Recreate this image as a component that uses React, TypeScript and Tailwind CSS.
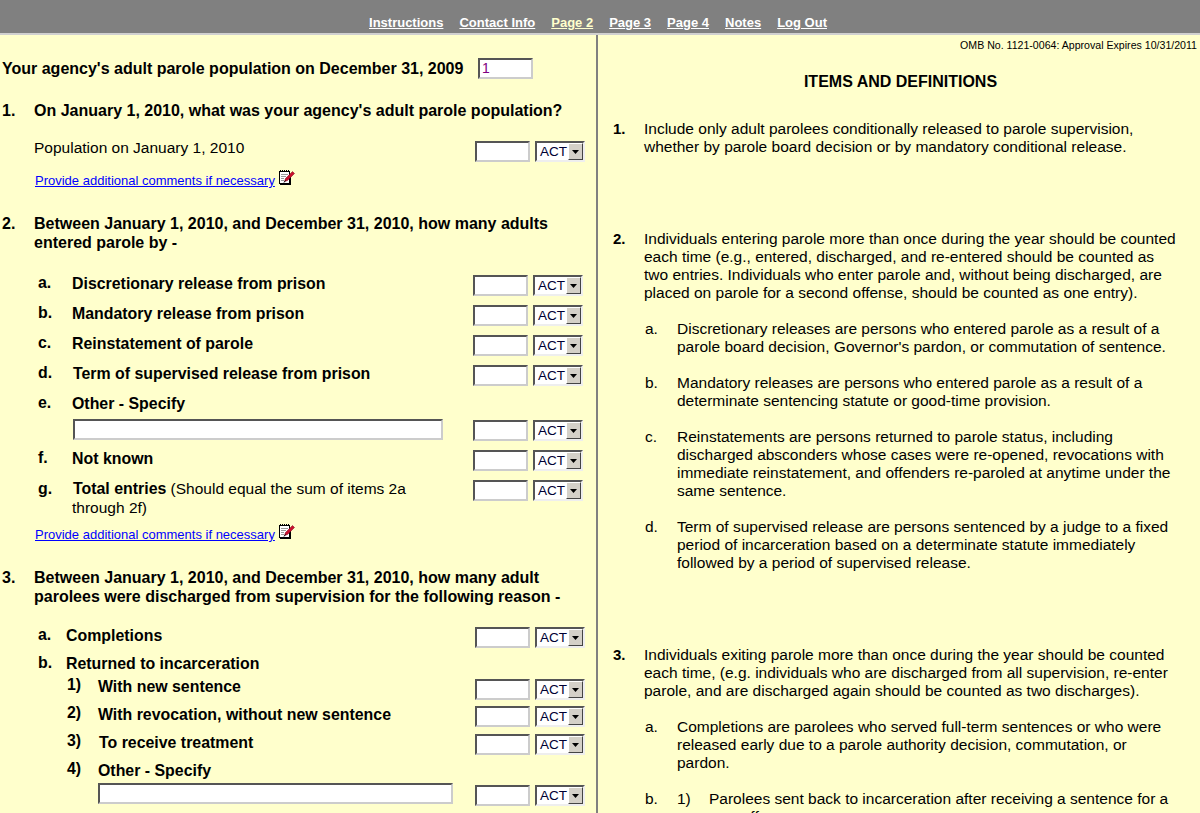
import React from "react";

const F = "font-['Liberation_Sans',Arial,sans-serif]";

function Note() {
  return (
    <svg width="17" height="16" viewBox="0 0 17 16" className="shrink-0">
      <rect x="1.5" y="2.5" width="10" height="12" fill="#fff" stroke="#000" />
      <path d="M12.5 6v10M2 15.5h11" stroke="#000" />
      <path d="M2 1.5h10" stroke="#000" strokeDasharray="1 1" />
      <path d="M3 5.5h7M3 7.5h5M3 9.5h3M3 11.5h3" stroke="#999" />
      <path d="M6.5 12.5l1-3 7-7 2 2-7 7z" fill="#c8102e" stroke="#7a0018" strokeWidth=".5" />
      <path d="M6 13.5l1.5-2" stroke="#000" />
    </svg>
  );
}

function Field({ className = "", value = "" }: { className?: string; value?: string }) {
  return (
    <input
      readOnly
      value={value}
      className={`h-[21px] box-border bg-white border-2 border-t-[#555] border-l-[#555] border-r-[#ccc] border-b-[#ccc] px-[2px] text-[14px] text-[#800080] outline-none ${className}`}
    />
  );
}

function Act() {
  return (
    <div className="w-[50px] h-[21px] box-border bg-white border-2 border-t-[#555] border-l-[#555] border-r-[#eee] border-b-[#eee] flex items-center justify-between text-[13.5px] leading-none text-[#000033] pl-[3px]">
      <span className="pt-[1px]">ACT</span>
      <span className="w-[15px] h-[17px] bg-[#d4d0c8] border border-t-white border-l-white border-r-[#444] border-b-[#444] flex items-center justify-center">
        <svg width="7" height="4" viewBox="0 0 7 4"><path d="M0 0h7L3.5 4z" fill="#000" /></svg>
      </span>
    </div>
  );
}

function Pair({ className = "" }: { className?: string }) {
  return (
    <div className={`flex gap-[5px] shrink-0 ${className}`}>
      <Field className="w-[55px]" />
      <Act />
    </div>
  );
}

function Comment({ className = "" }: { className?: string }) {
  return (
    <div className={`flex items-start pl-[35px] h-[20px] ${className}`}>
      <a href="#" className="text-[13px] leading-[22px] text-[#0000ff] underline">Provide additional comments if necessary</a>
      <span className="ml-[3px] -mt-[1px]"><Note /></span>
    </div>
  );
}

function Q({ n, children, className = "" }: { n: string; children: React.ReactNode; className?: string }) {
  return (
    <div className={`flex font-bold text-[16px] leading-[19px] text-black ${className}`}>
      <span className="w-[34px] pl-[2px] shrink-0">{n}</span>
      <span>{children}</span>
    </div>
  );
}

function Label({ l, children, lx, tx, num = "leading-[18px]" }: { l: string; children?: React.ReactNode; lx: string; tx: string; num?: string }) {
  return (
    <div className={`flex font-bold text-[15.9px] leading-[20px] text-black shrink-0 ${lx}`}>
      <span className={`${tx} ${num} shrink-0`}>{l}</span>
      <span>{children}</span>
    </div>
  );
}

function Row2({ l, children, tx = "w-[34px]", h = "h-[30px]" }: { l: string; children: React.ReactNode; tx?: string; h?: string }) {
  return (
    <div className={`flex items-start ${h}`}>
      <div className="w-[473px] shrink-0 pt-[1px]"><Label l={l} lx="pl-[38px]" tx={tx}>{children}</Label></div>
      <Pair className="mt-[2px]" />
    </div>
  );
}

function Row3({ l, children, tx, lx, h, fieldTop = "mt-[1px]", num }: { l: string; children: React.ReactNode; tx: string; lx: string; h: string; fieldTop?: string; num?: string }) {
  return (
    <div className={`flex items-start ${h}`}>
      <div className="w-[475px] shrink-0"><Label l={l} lx={lx} tx={tx} num={num}>{children}</Label></div>
      <Pair className={fieldTop} />
    </div>
  );
}

function Item({ n, children, className = "" }: { n: string; children: React.ReactNode; className?: string }) {
  return (
    <div className={`flex text-[15.5px] leading-[18px] text-black ${className}`}>
      <span className="w-[31px] shrink-0 font-bold text-[15px]">{n}</span>
      <p className="w-[532px]">{children}</p>
    </div>
  );
}

function Sub({ n, children, className = "" }: { n: string; children: React.ReactNode; className?: string }) {
  return (
    <div className={`flex text-[15.5px] leading-[18px] text-black pl-[32px] ${className}`}>
      <span className="w-[32px] shrink-0">{n}</span>
      <p className="w-[500px]">{children}</p>
    </div>
  );
}

export default function App() {
  return (
    <div className={`${F} w-[1200px] h-[813px] overflow-hidden bg-[#ffffcc] flex flex-col`}>
      <nav className="h-[35px] shrink-0 bg-[#808080] border-b-2 border-[#d0d0d0] flex items-end justify-center gap-[16px] pb-[1px] pr-[4px] text-[13px] leading-[18px] font-bold text-white">
        <a href="#" className="underline">Instructions</a>
        <a href="#" className="underline">Contact Info</a>
        <a href="#" className="underline text-[#ffffcc]">Page 2</a>
        <a href="#" className="underline">Page 3</a>
        <a href="#" className="underline">Page 4</a>
        <a href="#" className="underline">Notes</a>
        <a href="#" className="underline">Log Out</a>
      </nav>
      <div className="flex flex-1 min-h-0">
        <section className="w-[596px] shrink-0 overflow-hidden box-content border-r-2 border-[#808080]">
          <div className="flex items-center mt-[23px] h-[21px]">
            <span className="w-[478px] pl-[2px] font-bold text-[16px] text-black shrink-0">Your agency's adult parole population on December 31, 2009</span>
            <Field className="w-[55px]" value="1" />
          </div>
          <Q n="1." className="mt-[22px]">On January 1, 2010, what was your agency's adult parole population?</Q>
          <div className="flex items-start mt-[17px]">
            <span className="w-[475px] pl-[34px] pt-[1px] text-[15.5px] leading-[20px] text-black shrink-0">Population on January 1, 2010</span>
            <Pair className="mt-[4px]" />
          </div>
          <Comment className="mt-[8px]" />
          <Q n="2." className="mt-[24px]">Between January 1, 2010, and December 31, 2010, how many adults<br />entered parole by -</Q>
          <div className="mt-[21px]">
            <Row2 l="a.">Discretionary release from prison</Row2>
            <Row2 l="b.">Mandatory release from prison</Row2>
            <Row2 l="c.">Reinstatement of parole</Row2>
            <Row2 l="d." tx="w-[35px]">Term of supervised release from prison</Row2>
            <div className="h-[26px] pt-[1px]"><Label l="e." lx="pl-[38px]" tx="w-[34px]">Other - Specify</Label></div>
            <div className="flex items-start h-[29px]">
              <Field className="w-[370px] ml-[73px] mr-[30px]" />
              <Pair className="mt-[1px]" />
            </div>
            <Row2 l="f.">Not known</Row2>
            <div className="flex items-start h-[46px]">
              <div className="w-[473px] shrink-0 pl-[38px] pt-[1px] flex text-[15.5px] leading-[19px] text-black">
                <span className="w-[34px] font-bold shrink-0 text-[15.9px]">g.</span>
                <p className="w-[340px]"><b className="ml-px text-[15.9px]">Total entries</b> (Should equal the sum of items 2a through 2f)</p>
              </div>
              <Pair className="mt-[2px]" />
            </div>
          </div>
          <Comment />
          <Q n="3." className="mt-[24px]">Between January 1, 2010, and December 31, 2010, how many adult<br />parolees were discharged from supervision for the following reason -</Q>
          <div className="mt-[20px]">
            <Row3 l="a." lx="pl-[38px]" tx="w-[28px]" h="h-[27px]">Completions</Row3>
            <div className="h-[24px] pt-[1px]"><Label l="b." lx="pl-[38px]" tx="w-[28px]">Returned to incarceration</Label></div>
            <Row3 l="1)" lx="pl-[67px]" tx="w-[31px]" h="h-[28px]" fieldTop="mt-[2px]" num="leading-[16px]">With new sentence</Row3>
            <Row3 l="2)" lx="pl-[67px]" tx="w-[31px]" h="h-[28px]" num="leading-[16px]">With revocation, without new sentence</Row3>
            <Row3 l="3)" lx="pl-[67px]" tx="w-[32px]" h="h-[28px]" num="leading-[16px]">To receive treatment</Row3>
            <div className="h-[22px]"><Label l="4)" lx="pl-[67px]" tx="w-[31px]" num="leading-[16px]">Other - Specify</Label></div>
            <div className="flex items-start">
              <Field className="w-[355px] ml-[98px] mr-[22px]" />
              <Pair className="mt-[2px]" />
            </div>
          </div>
        </section>
        <section className="flex-1 min-w-0 overflow-hidden pl-[15px]">
          <p className="text-right pr-[3px] text-[10.6px] leading-[12px] mt-[4px] text-black">OMB No. 1121-0064: Approval Expires 10/31/2011</p>
          <h1 className="text-center font-bold text-[16px] leading-[20px] mt-[21px] pr-[12px] text-black">ITEMS AND DEFINITIONS</h1>
          <Item n="1." className="mt-[28px]">Include only adult parolees conditionally released to parole supervision, whether by parole board decision or by mandatory conditional release.</Item>
          <Item n="2." className="mt-[74px]">Individuals entering parole more than once during the year should be counted each time (e.g., entered, discharged, and re-entered should be counted as two entries. Individuals who enter parole and, without being discharged, are placed on parole for a second offense, should be counted as one entry).</Item>
          <Sub n="a." className="mt-[18px]">Discretionary releases are persons who entered parole as a result of a parole board decision, Governor's pardon, or commutation of sentence.</Sub>
          <Sub n="b." className="mt-[18px]">Mandatory releases are persons who entered parole as a result of a determinate sentencing statute or good-time provision.</Sub>
          <Sub n="c." className="mt-[18px]">Reinstatements are persons returned to parole status, including discharged absconders whose cases were re-opened, revocations with immediate reinstatement, and offenders re-paroled at anytime under the same sentence.</Sub>
          <Sub n="d." className="mt-[18px]">Term of supervised release are persons sentenced by a judge to a fixed period of incarceration based on a determinate statute immediately followed by a period of supervised release.</Sub>
          <Item n="3." className="mt-[74px]">Individuals exiting parole more than once during the year should be counted each time, (e.g. individuals who are discharged from all supervision, re-enter parole, and are discharged again should be counted as two discharges).</Item>
          <Sub n="a." className="mt-[18px]">Completions are parolees who served full-term sentences or who were released early due to a parole authority decision, commutation, or pardon.</Sub>
          <div className="flex text-[15.5px] leading-[18px] text-black pl-[32px] mt-[18px]">
            <span className="w-[32px] shrink-0">b.</span>
            <span className="w-[32px] shrink-0">1)</span>
            <p className="w-[470px]">Parolees sent back to incarceration after receiving a sentence for a new offense.</p>
          </div>
        </section>
      </div>
    </div>
  );
}
